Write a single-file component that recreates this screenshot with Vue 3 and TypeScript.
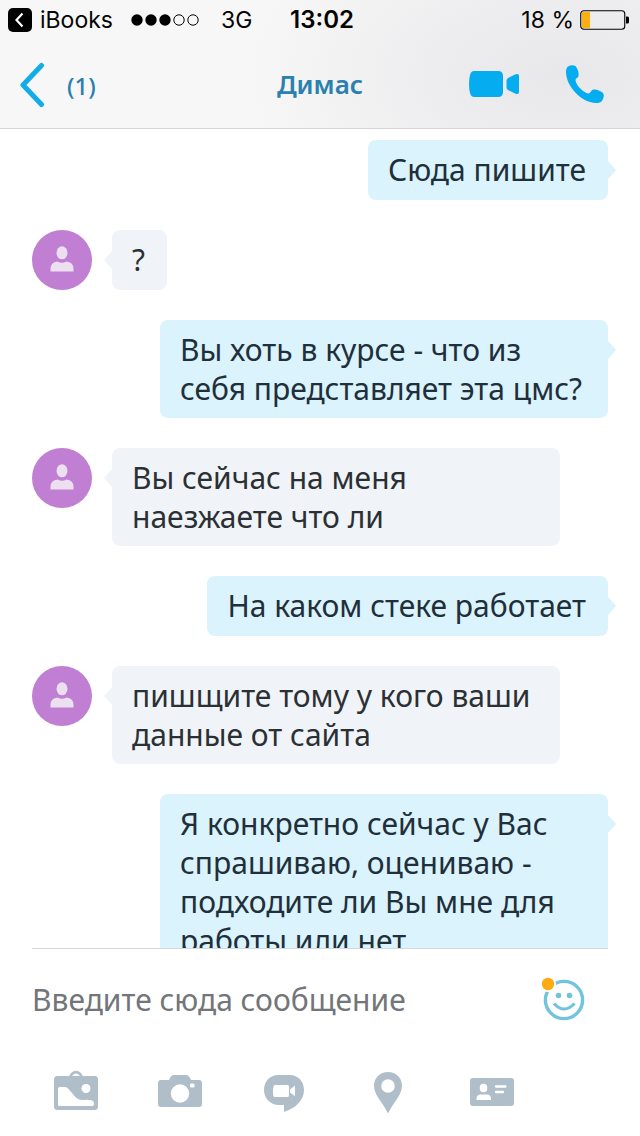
<script setup lang="ts">
interface Message {
  id: number
  own: boolean
  text: string
}

const contact = 'Димас'
const unread = 1
const battery = 18

const messages: Message[] = [
  { id: 1, own: true, text: 'Сюда пишите' },
  { id: 2, own: false, text: '?' },
  { id: 3, own: true, text: 'Вы хоть в курсе - что из себя представляет эта цмс?' },
  { id: 4, own: false, text: 'Вы сейчас на меня наезжаете что ли' },
  { id: 5, own: true, text: 'На каком стеке работает' },
  { id: 6, own: false, text: 'пишщите тому у кого ваши данные от сайта' },
  { id: 7, own: true, text: 'Я конкретно сейчас у Вас спрашиваю, оцениваю - подходите ли Вы мне для работы или нет' },
]
</script>

<template>
  <div class="screen">
    <header class="top">
      <div class="status">
        <div class="status-left">
          <a class="return" href="#">
            <svg width="24" height="24" viewBox="0 0 24 24" aria-hidden="true">
              <rect width="24" height="24" rx="5" fill="#000" />
              <path d="M14.500 5.500 8.500 12l6 6.500" fill="none" stroke="#fff" stroke-width="2.200" />
            </svg>
            <span>iBooks</span>
          </a>
          <svg class="signal" width="68" height="12" viewBox="0 0 68 12" role="img" aria-label="Сигнал">
            <circle cx="6" cy="6" r="5.7" />
            <circle cx="20" cy="6" r="5.7" />
            <circle cx="34" cy="6" r="5.7" />
            <circle cx="48" cy="6" r="5.2" fill="none" stroke="#000" />
            <circle cx="62" cy="6" r="5.2" fill="none" stroke="#000" />
          </svg>
          <span>3G</span>
        </div>
        <time class="clock">13:02</time>
        <div class="status-right">
          <span>{{ battery }} %</span>
          <svg width="50" height="20" viewBox="0 0 50 20" aria-hidden="true">
            <rect x="0.75" y="0.75" width="44" height="18.5" rx="3" fill="none" stroke="#000" stroke-width="1.1" />
            <rect x="2" y="2" width="8" height="16" rx="1" fill="#fdb010" />
            <path d="M46 6.500h1.500a1.500 1.500 0 0 1 1.500 1.500v4a1.500 1.500 0 0 1-1.500 1.500H46z" />
          </svg>
        </div>
      </div>
      <nav class="bar">
        <button class="back" type="button" aria-label="Назад">
          <svg width="26" height="46" viewBox="0 0 26 46" aria-hidden="true">
            <path d="M22.500 3.500 4 23l18.500 19.500" fill="none" stroke="#12ace9" stroke-width="5" stroke-linecap="round" stroke-linejoin="round" />
          </svg>
          <span>({{ unread }})</span>
        </button>
        <h1 class="title">{{ contact }}</h1>
        <div class="calls">
          <button type="button" aria-label="Видеозвонок">
            <svg width="52" height="28" viewBox="0 0 52 28" fill="#05adf0" aria-hidden="true">
              <path d="M6 1h24q5 0 5 5v16q0 5-5 5H6q-3 0-4-4-1-4-1-9t1-9q1-4 4-4z" />
              <path d="M38.500 10.500q0-1.500 1.500-2.500l7-3.500q4-1.500 4 1.500v16q0 3-4 1.500L40 20q-1.500-1-1.500-2.500z" />
            </svg>
          </button>
          <button type="button" aria-label="Позвонить">
            <svg width="40" height="40" viewBox="0 0 40 40" fill="#05adf0" aria-hidden="true">
              <path d="M3 2.500Q7 .5 10.500 2c2.500 3 3.500 7 3 10-.5 2-3 2-3 4.500 1 5 7 11.500 12.500 13 2.500.3 3-3.500 5.500-4 3-.5 6.500 1 9.500 3.500 1.500 2 .8 5-.8 7.500-1.200 2-3.200 2.500-6.200 2.500C16 38.500 1 22 1 8c0-2.500.5-4.500 2-5.500z" />
            </svg>
          </button>
        </div>
      </nav>
    </header>

    <main class="chat">
      <article v-for="message in messages" :key="message.id" class="row" :class="{ own: message.own }">
        <svg v-if="!message.own" class="avatar" width="60" height="60" viewBox="0 0 60 60" aria-hidden="true">
          <circle cx="30" cy="30" r="30" fill="#c07fd2" />
          <ellipse cx="30" cy="22.800" rx="5.500" ry="6.500" fill="#ecdff0" />
          <path d="M18.500 41.500v-2.500q0-7 7-7.500 4.500 2.500 9 0 7 .5 7 7.500v2.500z" fill="#ecdff0" />
        </svg>
        <p class="bubble">{{ message.text }}</p>
      </article>
    </main>

    <footer class="composer">
      <div class="entry">
        <input class="field" type="text" placeholder="Введите сюда сообщение" aria-label="Введите сюда сообщение" />
        <button class="emoji" type="button" aria-label="Смайлики">
          <svg width="44" height="44" viewBox="0 0 44 44" aria-hidden="true">
            <circle cx="23" cy="23" r="18.600" fill="none" stroke="#72c3de" stroke-width="3.400" />
            <circle cx="17.500" cy="18.500" r="2.800" fill="#72c3de" />
            <circle cx="28.500" cy="18.500" r="2.800" fill="#72c3de" />
            <path d="M13 26.500q10 11 20.500 0" fill="none" stroke="#72c3de" stroke-width="3.200" />
            <circle cx="7" cy="7" r="8" fill="#fff" />
            <circle cx="7" cy="7" r="6.200" fill="#fdab12" />
          </svg>
        </button>
      </div>
      <div class="tools">
        <button type="button" aria-label="Галерея">
          <svg width="48" height="44" viewBox="0 0 48 44" aria-hidden="true">
            <path d="M18 9q1-5 6-6 5 1 6 6" fill="none" stroke="#afbec8" stroke-width="2.500" />
            <rect x="2" y="7" width="44" height="34" rx="3.500" fill="#afbec8" />
            <path d="M6 36V20q0-2 2-2h5q2 0 3.500 2l7 8q3 3.500 8 3 10-1 10.500 3v1q0 2-2 2H7q-1 0-1-1z" fill="#fff" />
            <circle cx="34" cy="19.500" r="4.500" fill="#fff" />
          </svg>
        </button>
        <button type="button" aria-label="Камера">
          <svg width="48" height="44" viewBox="0 0 48 44" aria-hidden="true">
            <path d="M5 11h8q2-5 5-5h12q3 0 5 5h8q3 0 3 3v21q0 3-3 3H5q-3 0-3-3V14q0-3 3-3z" fill="#afbec8" />
            <circle cx="24" cy="24.500" r="9.200" fill="#fff" />
            <rect x="34" y="14.500" width="4.500" height="4" rx="1.300" fill="#fff" />
          </svg>
        </button>
        <button type="button" aria-label="Видеосообщение">
          <svg width="48" height="44" viewBox="0 0 48 44" aria-hidden="true">
            <path d="M18 6h12c8 0 14 6.500 14 15 0 10-8 18-20 22v-7h-5C10 36 4 29 4 21 4 12.500 10 6 18 6z" fill="#afbec8" />
            <path d="M14.500 16h13q1.500 0 1.500 1.500v9q0 1.500-1.500 1.500h-13q-1.500 0-1.500-5.500t1.500-6.500zM30 20.500l5-4v10.500l-5-3.500z" fill="#fff" />
          </svg>
        </button>
        <button type="button" aria-label="Местоположение">
          <svg width="48" height="44" viewBox="0 0 48 44" aria-hidden="true">
            <path d="M24 3c8 0 14 6 14 13.500 0 5-2.500 9.500-5 13.500Q27 38 24 44.500 21 38 15 30c-2.500-4-5-8.500-5-13.500C10 9 16 3 24 3z" fill="#afbec8" />
            <circle cx="24" cy="17" r="6.800" fill="#fff" />
          </svg>
        </button>
        <button type="button" aria-label="Контакт">
          <svg width="48" height="44" viewBox="0 0 48 44" aria-hidden="true">
            <rect x="2" y="9" width="44" height="28" rx="3" fill="#afbec8" />
            <ellipse cx="15.500" cy="19" rx="3.800" ry="4.300" fill="#fff" />
            <path d="M8.500 31v-1q0-4.500 4-4.500h6.500q4 0 4 4.500v1z" fill="#fff" />
            <path d="M28 17.500h9.500M28 23h7" stroke="#fff" stroke-width="2.300" stroke-linecap="round" />
          </svg>
        </button>
      </div>
    </footer>
  </div>
</template>

<style>
body {
  margin: 0;
}
</style>

<style scoped>
.screen {
  display: flex;
  flex-direction: column;
  height: 100vh;
  background: #fff;
  color: #212f3a;
  font-family: "Noto Sans", "Open Sans", sans-serif;
}

button {
  display: flex;
  align-items: center;
  justify-content: center;
  padding: 0;
  border: 0;
  background: none;
  font: inherit;
  color: inherit;
}

svg {
  display: block;
  flex: none;
}

.top {
  flex: none;
  border-bottom: 1px solid #d6d6d7;
  background: radial-gradient(ellipse 320px 180px at 88% 75px, #e8e7e9 0%, #ededef 40%, #f7f7f7 100%);
}

.status {
  display: grid;
  grid-template-columns: 1fr auto 1fr;
  align-items: center;
  height: 40px;
  padding: 0 10px 0 8px;
  font: 23px/40px Inter, "Liberation Sans", sans-serif;
  color: #050505;
}

.status-left,
.status-right,
.return {
  display: flex;
  align-items: center;
}

.return {
  gap: 8px;
  color: inherit;
  text-decoration: none;
}

.signal {
  margin: 0 22px 0 18px;
}

.clock {
  margin-left: 6px;
  font-size: 24px;
  font-weight: 600;
}

.status-right {
  justify-content: flex-end;
  gap: 6px;
}

.bar {
  display: grid;
  grid-template-columns: 1fr auto 1fr;
  align-items: center;
  height: 88px;
  padding: 0 19px;
  box-sizing: border-box;
  color: #2a80ae;
}

.back {
  justify-self: start;
  gap: 22px;
  padding-top: 2px;
  font-size: 24px;
  font-weight: 500;
}

.title {
  margin: 0;
  font-size: 26px;
  font-weight: 600;
}

.calls {
  display: flex;
  justify-content: flex-end;
  align-items: center;
  gap: 45px;
  padding-right: 16px;
}

.chat {
  flex: 1;
  min-height: 0;
  overflow: hidden;
  display: flex;
  flex-direction: column;
  gap: 30px;
  padding: 11px 32px 0;
}

.row {
  flex: none;
  display: flex;
  align-items: flex-start;
  gap: 20px;
}

.row.own {
  justify-content: flex-end;
}

.bubble {
  position: relative;
  box-sizing: border-box;
  min-height: 60px;
  max-width: 70vw;
  margin: 0;
  padding: 10px 22px 10px 20px;
  border-radius: 8px;
  background: #f0f4f8;
  font-size: 30px;
  line-height: 39px;
  color: #2b3035;
}

.bubble::before {
  content: "";
  position: absolute;
  top: 21px;
  left: -8px;
  width: 8px;
  height: 18px;
  background: inherit;
  clip-path: polygon(100% 0, 0 50%, 100% 100%);
}

.own .bubble {
  background: #daf3fd;
  color: #212f3a;
}

.own .bubble::before {
  left: 100%;
  clip-path: polygon(0 0, 100% 50%, 0 100%);
}

.composer {
  flex: none;
  padding-bottom: 3px;
}

.entry {
  display: flex;
  align-items: center;
  height: 100px;
  margin: 0 32px;
  padding-right: 23px;
  border-top: 1px solid #d3dade;
}

.field {
  flex: 1;
  min-width: 0;
  padding: 0;
  border: 0;
  outline: 0;
  background: none;
  font: inherit;
  font-size: 30px;
  line-height: 39px;
  color: #212f3a;
}

.field::placeholder {
  color: #727579;
  opacity: 1;
}

.tools {
  display: grid;
  grid-template-columns: repeat(5, 1fr);
  align-items: center;
  height: 84px;
  padding: 0 15% 0 24px;
}
</style>
